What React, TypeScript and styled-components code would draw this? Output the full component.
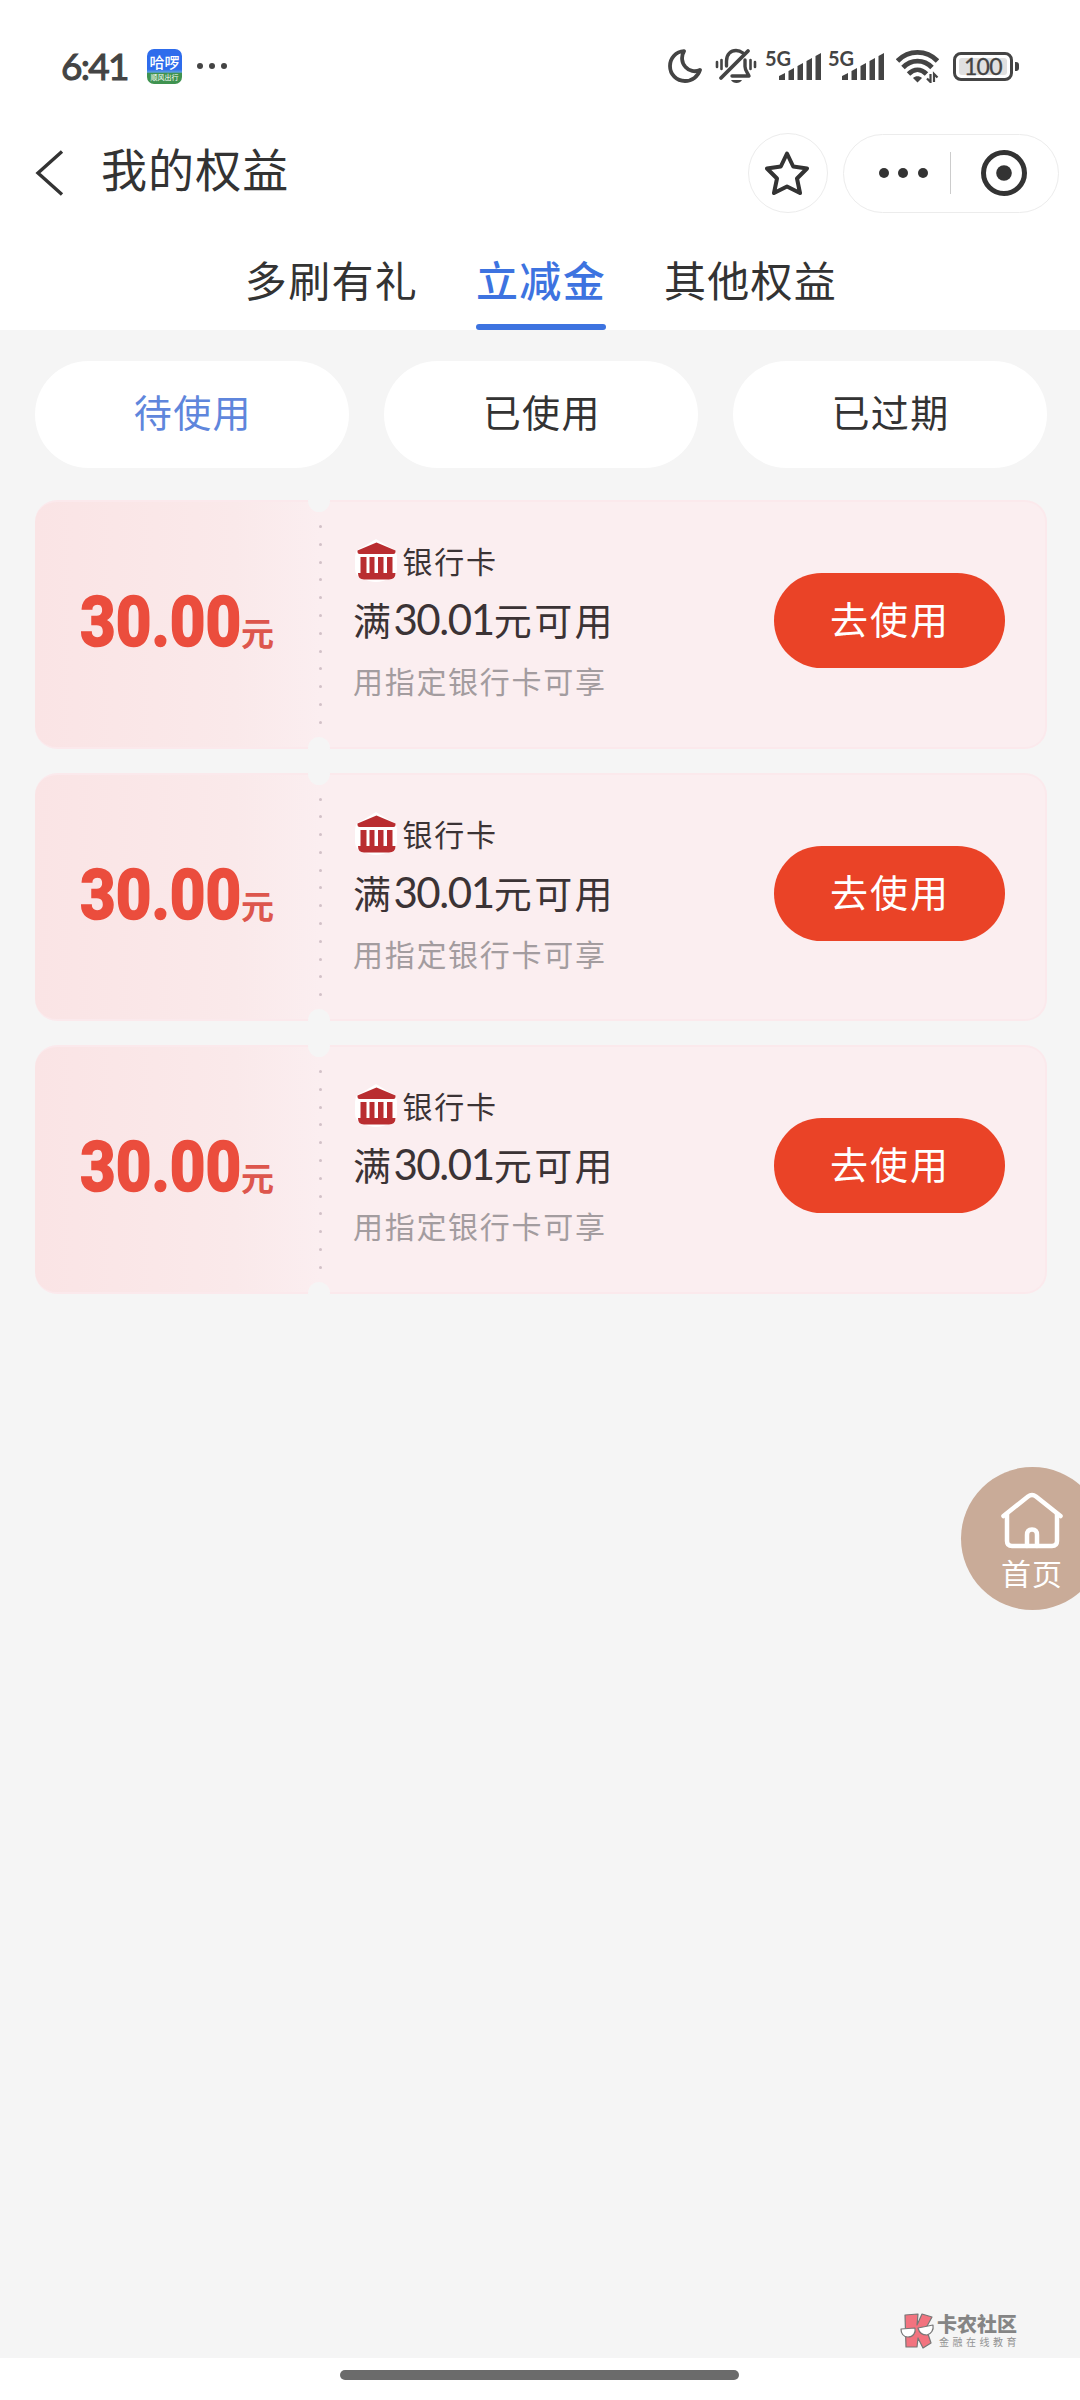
import React from 'react';
import styled, { createGlobalStyle } from 'styled-components';

const Global = createGlobalStyle`
  html, body { margin: 0; padding: 0; background: #fff; }
  *, *::before, *::after { box-sizing: border-box; }
  body { font-family: "Noto Sans CJK SC", sans-serif; }
  svg { display: block; flex: none; }
  button { font: inherit; border: 0; padding: 0; }
`;

const Screen = styled.div`
  width: 1080px;
  height: 2400px;
  display: flex;
  flex-direction: column;
  background: #fff;
  color: #333;
  overflow: hidden;
  position: relative;
`;

const StatusBar = styled.header`
  height: 132px;
  flex: none;
  display: flex;
  align-items: center;
  padding: 0 61px 0 61px;
  color: #444;
`;

const Clock = styled.span`
  width: 86px;
  font: 400 37px/50px Lato, sans-serif;
  letter-spacing: -1.7px;
  -webkit-text-stroke: 1.1px #444;
  white-space: nowrap;
`;

const AppBadge = styled.span`
  width: 35px;
  height: 35px;
  border-radius: 7px;
  overflow: hidden;
  display: flex;
  flex-direction: column;
  background: linear-gradient(#2e6cec 0 58%, #5c9fe0 66%, #3f9350 70%);
  color: #fff;
  text-align: center;
  white-space: nowrap;
`;

const BadgeName = styled.span`
  font-size: 15px;
  line-height: 15px;
  padding-top: 5px;
  height: 24px;
  font-weight: 500;
`;

const BadgeSub = styled.span`
  font-size: 7px;
  line-height: 9px;
`;

const StatusDots = styled.span`
  display: flex;
  gap: 6px;
  margin-left: 15px;
  i { width: 6px; height: 6px; border-radius: 50%; background: #444; }
`;

const StatusIcons = styled.div`
  margin-left: auto;
  display: flex;
  align-items: center;
`;

const Gap = styled.span<{ $w: number }>`
  width: ${p => p.$w}px;
  flex: none;
`;

const SignalBox = styled.span`
  width: 63px;
  display: flex;
  align-items: flex-start;
`;

const SignalLabel = styled.span`
  width: 14px;
  font: 700 20px/20px Lato, sans-serif;
  white-space: nowrap;
  margin-top: -4px;
`;

const Battery = styled.span`
  width: 60px;
  height: 29px;
  border: 3px solid #444;
  border-radius: 8px;
  padding: 3px;
  display: flex;
`;

const BatteryFill = styled.span`
  flex: 1;
  background: #e0e0e0;
  border-radius: 3px;
  display: flex;
  align-items: center;
  justify-content: center;
  font: 400 23px/23px Lato, sans-serif;
  letter-spacing: -0.6px;
  -webkit-text-stroke: 0.3px #444;
`;

const BatteryNub = styled.span`
  width: 4px;
  height: 9px;
  margin-left: 2px;
  border-radius: 0 3px 3px 0;
  background: #444;
`;

const TitleBar = styled.div`
  height: 82px;
  flex: none;
  display: flex;
  align-items: center;
  padding: 0 21.5px 0 35px;
`;

const Title = styled.h1`
  margin: -12px 0 0 37px;
  font-size: 46px;
  line-height: 60px;
  font-weight: 400;
  letter-spacing: 1.1px;
`;

const StarButton = styled.button`
  width: 80px;
  height: 80px;
  margin: 0 15px 0 auto;
  border: 1px solid #ececec;
  border-radius: 50%;
  background: #fff;
  display: flex;
  align-items: center;
  justify-content: center;
  padding-right: 2px;
`;

const Capsule = styled.div`
  width: 216px;
  height: 79px;
  border: 1px solid #ececec;
  border-radius: 40px;
  display: flex;
  align-items: center;
`;

const CapsuleDots = styled.span`
  display: flex;
  gap: 9.5px;
  margin-left: 35px;
  i { width: 10px; height: 10px; border-radius: 50%; background: #333; }
`;

const CapsuleLine = styled.span`
  width: 1px;
  height: 42px;
  margin: 0 30px 0 22px;
  background: #ccc;
`;

const Tabs = styled.nav`
  height: 116px;
  flex: none;
  display: flex;
  justify-content: center;
  gap: 58px;
  padding-left: 2px;
`;

const Tab = styled.a<{ $active?: boolean }>`
  height: 116px;
  padding-top: 36px;
  font-size: 42px;
  line-height: 58px;
  letter-spacing: 1.3px;
  color: ${p => (p.$active ? '#3d73e0' : '#333')};
  font-weight: ${p => (p.$active ? 500 : 400)};
  display: flex;
  flex-direction: column;
  justify-content: space-between;
`;

const TabLine = styled.span`
  height: 6px;
  border-radius: 3px;
  background: #3d73e0;
`;

const Content = styled.main`
  flex: 1;
  background: #f5f5f5;
  padding: 31px 33.5px 0 35px;
  display: flex;
  flex-direction: column;
`;

const Filters = styled.div`
  display: grid;
  grid-template-columns: repeat(3, 1fr);
  gap: 35px;
  margin-bottom: 32px;
`;

const Filter = styled.button<{ $active?: boolean }>`
  height: 107px;
  border-radius: 54px;
  background: #fff;
  font-size: 38px;
  line-height: 50px;
  padding: 0 0 7px 2px;
  letter-spacing: 1.4px;
  color: ${p => (p.$active ? '#5f86dc' : '#333')};
`;

const Coupons = styled.div`
  display: flex;
  flex-direction: column;
  gap: 24px;
`;

const Coupon = styled.article`
  height: 248.5px;
  border-radius: 22px;
  display: flex;
  position: relative;
  background: linear-gradient(90deg, #fae4e5 0, #fae9ea 200px, #fbeef0 285px);
  border: 2px solid #fbe9ec;
  border-left: 0;
`;

const Notch = styled.span<{ $bottom?: boolean }>`
  position: absolute;
  left: 273px;
  ${p => (p.$bottom ? 'bottom' : 'top')}: -13px;
  width: 22px;
  height: 23px;
  border-radius: 50%;
  background: #f5f5f5;
`;

const Amount = styled.div`
  width: 284px;
  display: flex;
  align-items: baseline;
  padding: 70px 0 0 45px;
  color: #eb4d3d;
`;

const AmountNumber = styled.span`
  width: 161px;
  font: 800 70px/100px Roboto, sans-serif;
  transform: scaleX(0.885);
  transform-origin: 0 50%;
  -webkit-text-stroke: 1.6px #eb4d3d;
  white-space: nowrap;
`;

const AmountUnit = styled.span`
  font-size: 33px;
  line-height: 40px;
  font-weight: 700;
  color: #dd564d;
`;

const Perforation = styled.div`
  width: 3px;
  padding: 23px 0 0;
  display: flex;
  flex-direction: column;
  gap: 14.8px;
  i { width: 3px; height: 3px; border-radius: 50%; background: #d2c1c7; flex: none; }
`;

const Details = styled.div`
  flex: 1;
  padding: 37px 0 0 31px;
`;

const BankRow = styled.div`
  display: flex;
  align-items: center;
  height: 44px;
  gap: 6px;
  padding-left: 1.5px;
  font-size: 30px;
  letter-spacing: 1.8px;
  color: #3b3335;
`;

const BankLabel = styled.span`
  line-height: 44px;
  margin-top: -2px;
`;

const Condition = styled.div`
  height: 56px;
  margin-top: 8px;
  display: flex;
  align-items: baseline;
  font-size: 38px;
  line-height: 56px;
  letter-spacing: 2.4px;
  color: #3b3335;
`;

const Digits = styled.span`
  font-family: Lato, sans-serif;
  font-size: 42px;
  letter-spacing: -1.4px;
`;

const Note = styled.div`
  font-size: 30px;
  line-height: 44px;
  margin-top: 11px;
  letter-spacing: 1.7px;
  color: #a39c9f;
`;

const UseButton = styled.button`
  width: 231px;
  height: 95px;
  border-radius: 48px;
  margin: 71px 39.5px 0 0;
  padding: 0 0 6px 1px;
  background: #ea4327;
  color: #fff;
  font-size: 38px;
  letter-spacing: 2px;
`;

const HomeButton = styled.button`
  position: absolute;
  left: 961px;
  top: 1467px;
  width: 143px;
  height: 143px;
  border-radius: 50%;
  background: #c9ab98;
  color: #fff;
  display: flex;
  flex-direction: column;
  align-items: center;
  padding: 25px 1px 0 0;
`;

const HomeLabel = styled.span`
  font-size: 30px;
  line-height: 40px;
  margin-top: 3px;
  letter-spacing: 1px;
`;

const Watermark = styled.div`
  margin: auto 0 9px 865px;
  display: flex;
  align-items: center;
  gap: 2px;
  color: #858585;
  white-space: nowrap;
`;

const MarkTitle = styled.div`
  font-size: 20px;
  line-height: 22px;
  font-weight: 900;
`;

const MarkSub = styled.div`
  font-size: 10px;
  line-height: 13px;
  letter-spacing: 3.5px;
  padding: 0 0 1px 2px;
  color: #939393;
`;

const GestureArea = styled.footer`
  height: 42px;
  flex: none;
  display: flex;
  justify-content: center;
  padding: 12px 1px 0 0;
`;

const GestureBar = styled.span`
  width: 399px;
  height: 10px;
  border-radius: 5px;
  background: #6b6b6b;
`;

const Moon = () => (
  <svg width="34" height="34" viewBox="0 0 34 34" fill="none" stroke="#444" strokeWidth="3.8" strokeLinejoin="round">
    <path d="M16 2.2 C8 2.5 2 9 2 17 C2 25.500 8.500 32 17 32 C24 32 30 27.500 32 21 C27 23.500 21 22 17.500 18 C13.500 14 13 7 16 2.200 Z" />
  </svg>
);

const MutedBell = () => (
  <svg width="42" height="36" viewBox="0 0 42 36" fill="none" stroke="#444" strokeWidth="3.4" strokeLinecap="round">
    <path d="M2 14v5M6.500 12v9M40 14v5M35.500 12v9" strokeWidth="2.600" />
    <path d="M11.500 18V13C11.500 6 16 2.500 21 2.500C23.500 2.500 26 3.500 28 5" />
    <path d="M30 12V18.500C30 22 32 24 34 28H17" strokeLinejoin="round" />
    <path d="M33 3L6 30" strokeWidth="3.800" />
    <path d="M16 32h11c-2 4-9 4-11 0z" fill="#444" stroke="none" />
  </svg>
);

const Signal = () => (
  <SignalBox>
    <SignalLabel>5G</SignalLabel>
    <svg width="43" height="29" viewBox="0 0 43 29" fill="#444">
      <path d="M0 28V24L6 21V28ZM9.500 28V19L15 16V28ZM18.500 28V14L24 11V28ZM27.500 28V9L33 6V28ZM36.500 28V4L42 1V28Z" />
    </svg>
  </SignalBox>
);

const Wifi = () => (
  <svg width="43" height="34" viewBox="0 0 43 34" fill="none" stroke="#444" strokeWidth="4.800">
    <path d="M1.500 12C12.500 .500 30.500 .500 41.500 12" />
    <path d="M7 18.500C15 10 28 10 36 18.500" />
    <path d="M12.500 25C18 19.500 25 19.500 30.500 25" />
    <path d="M17 29C19.500 26.500 23.500 26.500 26 29L21.500 33.500Z" fill="#444" stroke="none" />
    <path d="M34.500 25V33L31 29.500M38 33V25L41.500 28.500" strokeWidth="2.200" />
  </svg>
);

const Bank = () => (
  <svg width="42" height="44" viewBox="0 0 42 44">
    <path d="M8 8L21 0L34 8Q42 10 42 18V30Q42 37 35 39Q21 47 7 39Q0 37 0 30V18Q0 10 8 8Z" fill="#fff" />
    <path d="M2.500 13V11.500L21.500 3.500L40.500 11.500V13Q40.500 15 38.500 15H4.500Q2.500 15 2.500 13Z" fill="#b92d30" />
    <path d="M5.500 18H11.500V34H14.500V18H19.500V34H23V18H28.500V34H32V18H37.500V34H40.500Q40.500 40.500 34 40.500H9Q3 40.500 3 34H5.500Z" fill="#b92d30" />
  </svg>
);

const MarkLogo = () => (
  <svg width="35" height="36" viewBox="0 0 35 36" stroke="#777" strokeWidth="1.200" strokeLinejoin="round">
    <path d="M5 2L18 1L17 12L22 1L32 4L26 15L31 30L23 35L18 25L17 34H6Z" fill="#f2737f" />
    <path d="M1 16L15 15C16 20 13 24 8 24C3 24 1 20 1 16ZM18 15L33 12C34 17 31 21 27 22C22 22 19 19 18 15Z" fill="#fff" />
  </svg>
);

const tabs = ['多刷有礼', '立减金', '其他权益'];
const filters = ['待使用', '已使用', '已过期'];
const coupons = [
  { id: 1, amount: '30.00', limit: '30.01' },
  { id: 2, amount: '30.00', limit: '30.01' },
  { id: 3, amount: '30.00', limit: '30.01' },
];

export default function App() {
  return (
    <Screen>
      <Global />
      <StatusBar>
        <Clock>6:41</Clock>
        <AppBadge>
          <BadgeName>哈啰</BadgeName>
          <BadgeSub>顺风出行</BadgeSub>
        </AppBadge>
        <StatusDots><i /><i /><i /></StatusDots>
        <StatusIcons>
          <Moon />
          <Gap $w={13} />
          <MutedBell />
          <Gap $w={8} />
          <Signal />
          <Signal />
          <Gap $w={5} />
          <Wifi />
          <Gap $w={14} />
          <Battery><BatteryFill>100</BatteryFill></Battery>
          <BatteryNub />
        </StatusIcons>
      </StatusBar>

      <TitleBar>
        <svg width="29" height="46" viewBox="0 0 29 46" fill="none" stroke="#333" strokeWidth="3.400">
          <path d="M27 1.500L3 23L27 44.500" />
        </svg>
        <Title>我的权益</Title>
        <StarButton>
          <svg width="44" height="44" viewBox="0 0 44 44" fill="none" stroke="#333" strokeWidth="4" strokeLinejoin="round">
            <path d="M22 2.500L28.200 15.500L42 17.500L32 27.500L35 42L22 35.500L9 42L12 27.500L2 17.500L15.800 15.500Z" />
          </svg>
        </StarButton>
        <Capsule>
          <CapsuleDots><i /><i /><i /></CapsuleDots>
          <CapsuleLine />
          <svg width="46" height="46" viewBox="0 0 46 46">
            <circle cx="23" cy="23" r="20.500" fill="none" stroke="#333" strokeWidth="5" />
            <circle cx="23" cy="23" r="7.800" fill="#333" />
          </svg>
        </Capsule>
      </TitleBar>

      <Tabs>
        {tabs.map((label, i) => (
          <Tab key={label} $active={i === 1}>
            {label}
            {i === 1 && <TabLine />}
          </Tab>
        ))}
      </Tabs>

      <Content>
        <Filters>
          {filters.map((label, i) => (
            <Filter key={label} $active={i === 0}>{label}</Filter>
          ))}
        </Filters>
        <Coupons>
          {coupons.map(c => (
            <Coupon key={c.id}>
              <Amount>
                <AmountNumber>{c.amount}</AmountNumber>
                <AmountUnit>元</AmountUnit>
              </Amount>
              <Perforation>
                {Array.from({ length: 12 }, (_, i) => <i key={i} />)}
              </Perforation>
              <Details>
                <BankRow>
                  <Bank />
                  <BankLabel>银行卡</BankLabel>
                </BankRow>
                <Condition>
                  满<Digits>{c.limit}</Digits>元可用
                </Condition>
                <Note>用指定银行卡可享</Note>
              </Details>
              <UseButton>去使用</UseButton>
              <Notch />
              <Notch $bottom />
            </Coupon>
          ))}
        </Coupons>
        <Watermark>
          <MarkLogo />
          <div>
            <MarkTitle>卡农社区</MarkTitle>
            <MarkSub>金融在线教育</MarkSub>
          </div>
        </Watermark>
      </Content>

      <GestureArea><GestureBar /></GestureArea>

      <HomeButton>
        <svg width="62" height="57" viewBox="0 0 62 57" fill="none" stroke="#fff" strokeWidth="4.500" strokeLinecap="round" strokeLinejoin="round">
          <path d="M2.500 24L27 4.500Q31 1.500 35 4.500L59.500 24" />
          <path d="M6 22V49Q6 54 11 54H51Q56 54 56 49V22" />
          <path d="M26 54V43Q26 37.500 31 37.500Q36 37.500 36 43V54" />
        </svg>
        <HomeLabel>首页</HomeLabel>
      </HomeButton>
    </Screen>
  );
}
